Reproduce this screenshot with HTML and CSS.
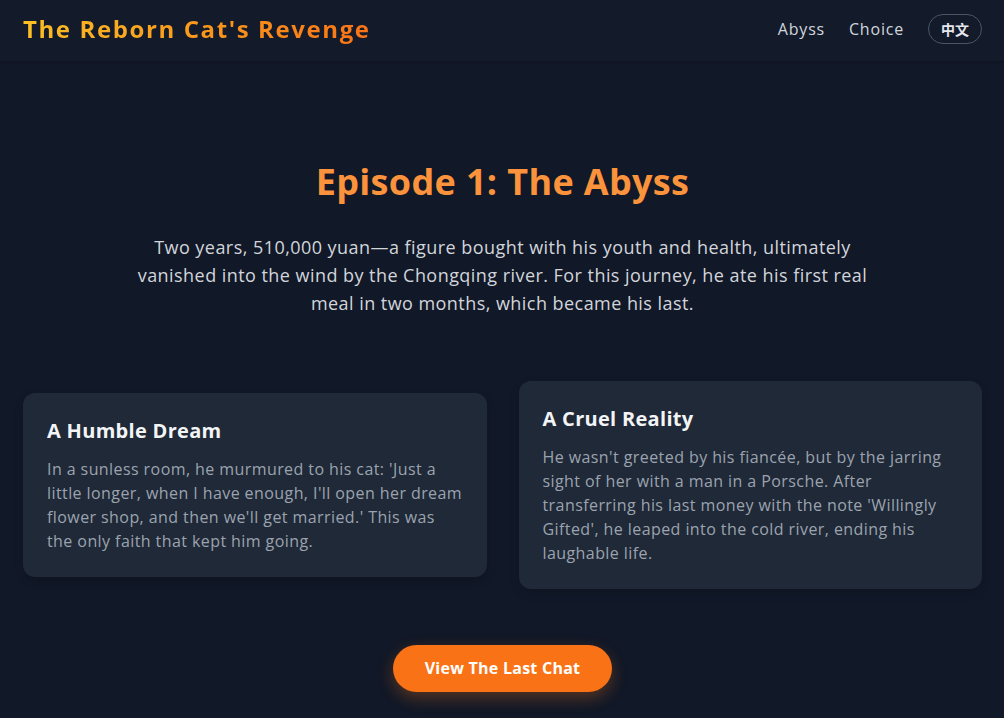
FILE: index.html
```html
<!DOCTYPE html>
<html lang="en">
<head>
<meta charset="utf-8">
<title>The Reborn Cat's Revenge</title>
<link rel="stylesheet" href="styles.css">
</head>
<body>
<header class="site-header">
  <h1 class="brand">The Reborn Cat's Revenge</h1>
  <nav class="nav">
    <a class="nav-link" href="#">Abyss</a>
    <a class="nav-link" href="#">Choice</a>
    <button class="lang-btn" type="button">中文</button>
  </nav>
</header>
<main class="main">
  <section class="hero">
    <h2 class="hero-title">Episode 1: The Abyss</h2>
    <p class="hero-text">Two years, 510,000 yuan—a figure bought with his youth and health, ultimately vanished into the wind by the Chongqing river. For this journey, he ate his first real meal in two months, which became his last.</p>
  </section>
  <section class="cards">
    <article class="card">
      <h3 class="card-title">A Humble Dream</h3>
      <p class="card-text">In a sunless room, he murmured to his cat: 'Just a little longer, when I have enough, I'll open her dream flower shop, and then we'll get married.' This was the only faith that kept him going.</p>
    </article>
    <article class="card">
      <h3 class="card-title">A Cruel Reality</h3>
      <p class="card-text">He wasn't greeted by his fiancée, but by the jarring sight of her with a man in a Porsche. After transferring his last money with the note 'Willingly Gifted', he leaped into the cold river, ending his laughable life.</p>
    </article>
  </section>
  <div class="cta-row">
    <button class="cta" type="button">View The Last Chat</button>
  </div>
</main>
</body>
</html>
```

FILE: styles.css
```css
* { box-sizing: border-box; }
html, body { margin: 0; padding: 0; }
body {
  background: #111827;
  color: #d1d5db;
  font-family: "Open Sans", "Noto Sans CJK SC", sans-serif;
  min-height: 718px;
}
.site-header {
  height: 61px;
  display: flex;
  align-items: center;
  justify-content: space-between;
  padding: 0 22px 3px 23px;
  background: #131b2b;
  box-shadow: 0 1px 3px rgba(0,0,0,0.25);
}
.brand {
  margin: 0;
  font-size: 24px;
  line-height: 32px;
  font-weight: 700;
  letter-spacing: 1.6px;
  background: linear-gradient(90deg, #fbbf24, #f97316);
  -webkit-background-clip: text;
  background-clip: text;
  color: transparent;
}
.nav {
  display: flex;
  align-items: center;
  gap: 24px;
}
.nav-link {
  color: #d1d5db;
  text-decoration: none;
  font-size: 16px;
  letter-spacing: 0.8px;
}
.lang-btn {
  font-family: "Noto Sans CJK SC", sans-serif;
  font-weight: 700;
  font-size: 14px;
  color: #e5e7eb;
  background: transparent;
  border: 1px solid #4b5563;
  border-radius: 999px;
  height: 30px;
  padding: 0 12px;
  line-height: 1;
}
.main {
  padding: 0 22px 0 23px;
}
.hero {
  padding-top: 101px;
  text-align: center;
}
.hero-title {
  margin: 0 0 31px;
  font-size: 36px;
  line-height: 40px;
  font-weight: 700;
  letter-spacing: 0.35px;
  color: #fb923c;
}
.hero-text {
  margin: 0 auto;
  max-width: 768px;
  font-size: 18px;
  line-height: 28px;
  letter-spacing: 0.45px;
  color: #d1d5db;
}
.cards {
  margin-top: 64px;
  display: grid;
  grid-template-columns: 1fr 1fr;
  gap: 32px;
  align-items: center;
}
.card {
  background: #1f2937;
  border-radius: 12px;
  padding: 24px;
  box-shadow: 0 4px 10px rgba(0,0,0,0.15);
}
.card-title {
  margin: 0 0 12px;
  font-size: 20px;
  line-height: 28px;
  font-weight: 700;
  letter-spacing: 0.3px;
  color: #f3f4f6;
}
.card-text {
  margin: 0;
  font-size: 16px;
  line-height: 24px;
  letter-spacing: 0.42px;
  color: #9ca3af;
}
.cta-row {
  margin-top: 56px;
  display: flex;
  justify-content: center;
}
.cta {
  font-family: inherit;
  font-size: 16px;
  line-height: 23px;
  font-weight: 700;
  letter-spacing: 0.25px;
  color: #fff;
  background: #f97316;
  border: none;
  border-radius: 999px;
  padding: 12px 32px;
  box-shadow: 0 6px 16px rgba(249,115,22,0.3);
}
```
